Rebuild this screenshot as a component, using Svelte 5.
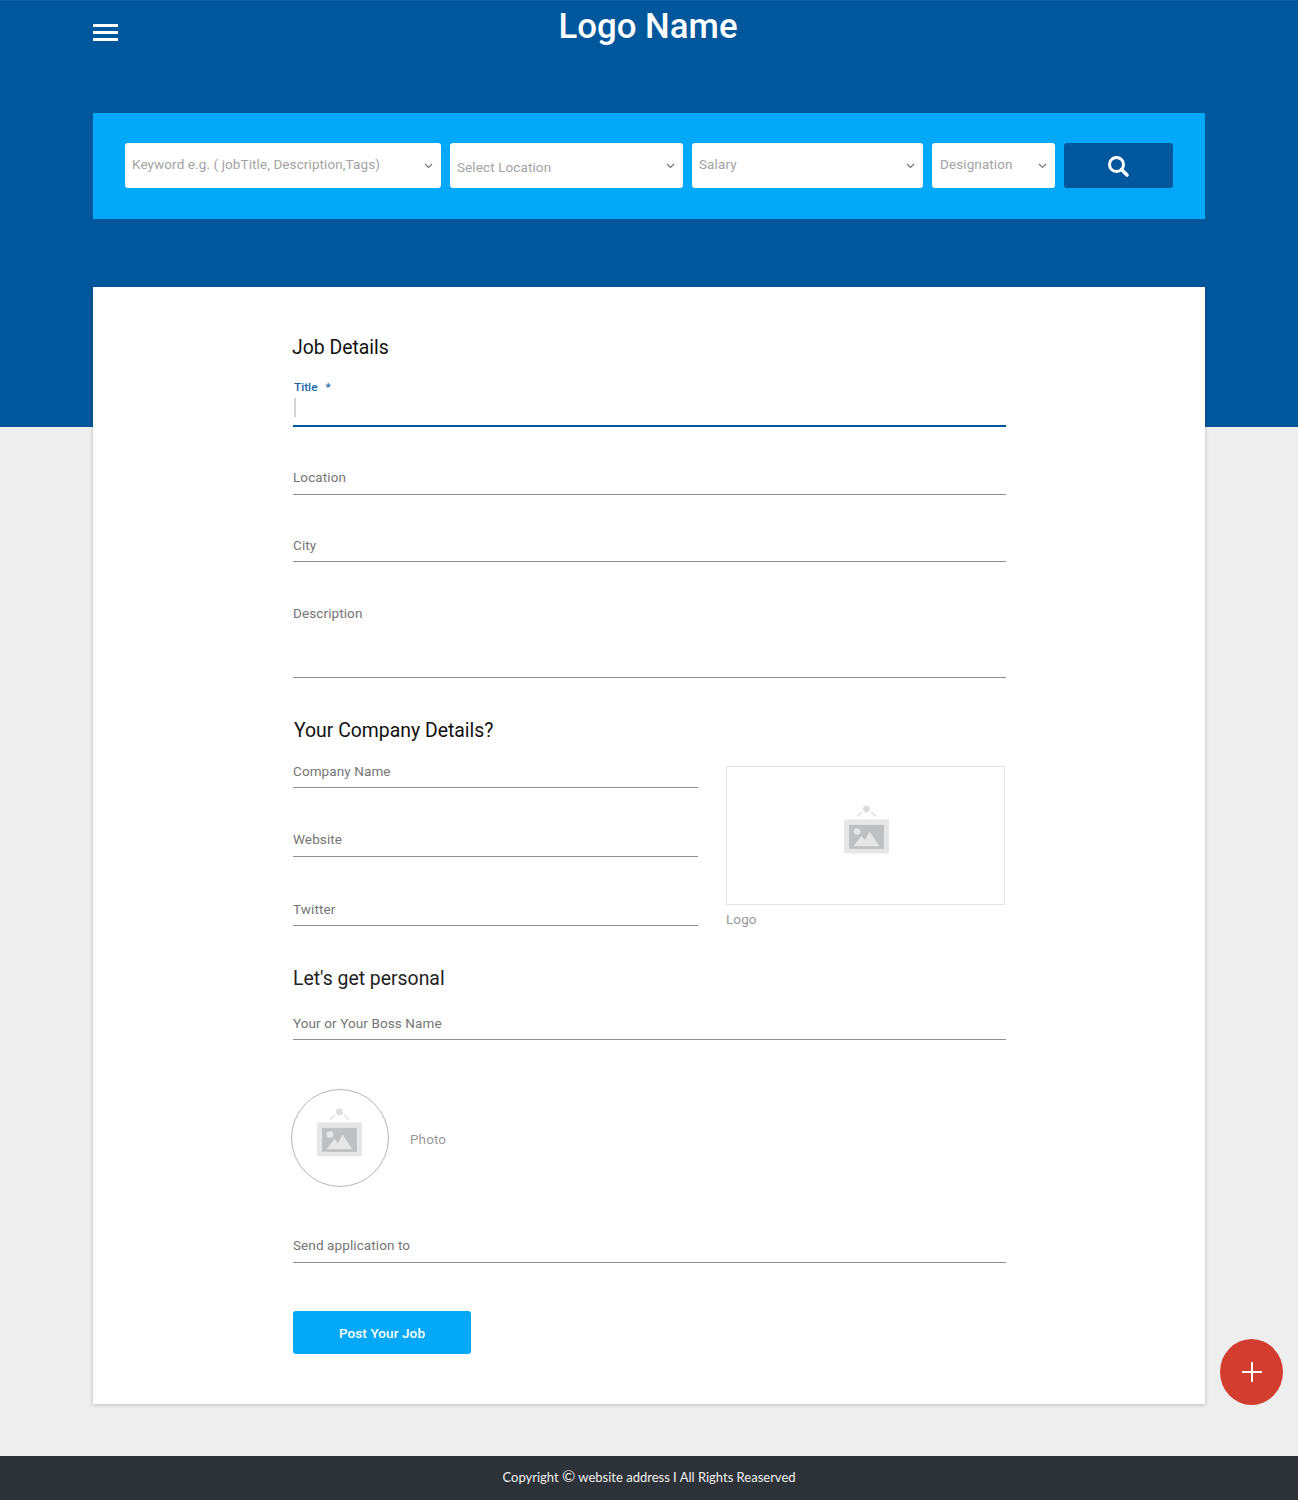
<script lang="ts">
	const filters = [
		{ label: "Keyword e.g. ( jobTitle, Description,Tags)", width: 316, shift: -2, pad: 7 },
		{ label: "Select Location", width: 233, shift: 1, pad: 7 },
		{ label: "Salary", width: 231, shift: -2, pad: 7 },
		{ label: "Designation", width: 123, shift: -2, pad: 8 },
	];
</script>

{#snippet picture(size)}
	<svg class="pic" width={size} height={size * 1.13} viewBox="0 0 45 51" aria-hidden="true">
		<circle cx="22.5" cy="4" r="3.5" fill="#dedede" />
		<path d="M13 11.5 18 7M32 11.5 27 7" stroke="#e6e6e6" stroke-width="2" fill="none" />
		<rect x="0" y="14.500" width="45" height="34" fill="#e6e6e6" />
		<rect x="5" y="20" width="35" height="24" fill="#bfc0c1" />
		<circle cx="13" cy="26.500" r="3.300" fill="#e6e6e6" />
		<path d="M9.500 41.500 17.500 31 21 35 25.500 26.500 35.500 41.500Z" fill="#e6e6e6" />
	</svg>
{/snippet}

{#snippet field(label, cls = "")}
	<div class="field {cls}">
		<span>{label}</span>
	</div>
{/snippet}

<div class="page">
	<header class="hero">
		<div class="topbar">
			<button class="menu" aria-label="Menu">
				<i></i><i></i><i></i>
			</button>
			<h1>Logo Name</h1>
		</div>
		<form class="search" onsubmit={(e) => e.preventDefault()}>
			{#each filters as f}
				<div class="select" style="width: {f.width}px; padding-left: {f.pad}px">
					<span style="transform: translateY({f.shift}px)">{f.label}</span>
					<svg width="9" height="6" viewBox="0 0 9 6" aria-hidden="true">
						<path d="M1 1l3.500 3.500L8 1" fill="none" stroke="#757575" stroke-width="1.200" />
					</svg>
				</div>
			{/each}
			<button class="go" aria-label="Search">
				<svg width="24" height="24" viewBox="0 0 24 24" aria-hidden="true">
					<circle cx="10.500" cy="10.500" r="7" fill="none" stroke="#fff" stroke-width="3" />
					<path d="M15.500 15.500 21 21" stroke="#fff" stroke-width="3.600" stroke-linecap="round" />
				</svg>
			</button>
		</form>
	</header>

	<main class="card">
		<div class="form">
			<h2 class="first">Job Details</h2>
			<div class="active">
				<label for="title">Title <b>*</b></label>
				<div class="caret" id="title"></div>
			</div>
			{@render field("Location", "location")}
			{@render field("City", "city")}
			{@render field("Description", "description")}

			<h2 class="company">Your Company Details?</h2>
			<div class="columns">
				<div class="left">
					{@render field("Company Name", "company-name")}
					{@render field("Website", "website")}
					{@render field("Twitter", "twitter")}
				</div>
				<div class="right">
					<div class="logo-box">{@render picture(45)}</div>
					<span class="caption">Logo</span>
				</div>
			</div>

			<h2 class="personal">Let's get personal</h2>
			{@render field("Your or Your Boss Name", "boss")}
			<div class="photo">
				<div class="circle">{@render picture(45)}</div>
				<span class="caption">Photo</span>
			</div>
			{@render field("Send application to", "send")}

			<button class="post">Post Your Job</button>
		</div>
	</main>

	<footer>Copyright <span class="copy">©</span> website address I All Rights Reaserved</footer>

	<button class="fab" aria-label="Add">
		<svg width="20" height="20" viewBox="0 0 20 20" aria-hidden="true">
			<path d="M10 0v20M0 10h20" stroke="#fff" stroke-width="2" />
		</svg>
	</button>
</div>

<style>
	:global(body) {
		margin: 0;
		background: #eeeeee;
		font-family: Roboto, "Liberation Sans", sans-serif;
	}

	.page {
		position: relative;
		height: 1500px;
		overflow: hidden;
		display: flex;
		flex-direction: column;
	}

	.hero {
		height: 427px;
		flex: none;
		background: #01579b;
		box-shadow: inset 0 1px 0 #0b5f9f;
		padding: 0 93px;
		box-sizing: border-box;
	}

	.topbar {
		position: relative;
		height: 113px;
	}

	.menu {
		position: absolute;
		left: 0;
		top: 24px;
		width: 25px;
		padding: 0;
		border: none;
		background: none;
		display: flex;
		flex-direction: column;
		gap: 4px;
	}

	.menu i {
		display: block;
		height: 3px;
		background: #fff;
	}

	h1 {
		margin: 0;
		padding: 5px 2px 0 0;
		text-align: center;
		color: #fff;
		font-size: 34.800px;
		line-height: 42px;
		font-weight: 500;
	}

	.search {
		height: 106px;
		background: #03a9f8;
		display: flex;
		align-items: flex-start;
		gap: 9px;
		padding: 30px 32px 0;
		box-sizing: border-box;
	}

	.select {
		height: 45px;
		box-sizing: border-box;
		flex: none;
		background: #fff;
		border-radius: 3px;
		display: flex;
		align-items: center;
		justify-content: space-between;
		padding: 0 8px;
		color: #a3a3a3;
		font-size: 13.500px;
		letter-spacing: 0.1px;
	}

	.go {
		width: 109px;
		height: 45px;
		flex: none;
		border: none;
		border-radius: 3px;
		background: #01579b;
		display: flex;
		align-items: center;
		justify-content: center;
		padding: 0 1px 0 0;
	}

	.card {
		margin: -140px 93px 0;
		height: 1117px;
		flex: none;
		background: #fff;
		box-shadow: 0 1px 4px rgba(0, 0, 0, 0.22);
		box-sizing: border-box;
		padding: 0 199px 0 200px;
	}

	.form {
		display: flex;
		flex-direction: column;
		align-items: stretch;
	}

	h2 {
		margin: 0;
		font-size: 19.400px;
		line-height: 24px;
		font-weight: 400;
		color: #111;
	}

	.first {
		margin: 49px 0 0 -1px;
	}

	.active {
		margin-top: 19px;
		height: 48px;
		box-sizing: border-box;
		border-bottom: 2px solid #01579b;
	}

	.active label {
		display: block;
		padding: 1px 0 0 1px;
		font-size: 11.800px;
		line-height: 14px;
		font-weight: 500;
		color: #1467a8;
	}

	.active b {
		margin-left: 5px;
		font-weight: 500;
	}

	.caret {
		width: 1.500px;
		height: 19px;
		margin-top: 4px;
		margin-left: 1px;
		background: #d2d2d2;
	}

	.field {
		border-bottom: 1px solid #8f8f8f;
		color: #757575;
		font-size: 13.500px;
		line-height: 16px;
		letter-spacing: 0.1px;
		box-sizing: border-box;
	}

	.field span {
		display: block;
		margin-top: -1px;
	}

	.location {
		margin-top: 43px;
		height: 25px;
	}

	.city {
		margin-top: 43px;
		height: 24px;
	}

	.description {
		margin-top: 44px;
		height: 72px;
	}

	.company {
		margin: 41px 0 0 1px;
	}

	.columns {
		display: flex;
		justify-content: space-between;
		margin-top: 23px;
		height: 165px;
	}

	.left {
		display: flex;
		flex-direction: column;
		width: 405px;
	}

	.right {
		width: 280px;
	}

	.left :global(.company-name) {
		margin-top: -2px;
		height: 24px;
		flex: none;
	}

	.left :global(.website) {
		margin-top: 44px;
		height: 25px;
		flex: none;
	}

	.left :global(.twitter) {
		margin-top: 45px;
		height: 24px;
		flex: none;
	}

	.logo-box {
		width: 279px;
		height: 139px;
		box-sizing: border-box;
		border: 1px solid #e3e3e3;
		display: flex;
		align-items: center;
		justify-content: center;
	}

	.pic {
		margin-bottom: 10px;
	}

	.logo-box .pic {
		margin-left: 2px;
	}

	.caption {
		color: #9a9a9a;
		font-size: 13.500px;
		line-height: 16px;
		letter-spacing: 0.1px;
	}

	.right .caption {
		display: block;
		margin-top: 6px;
	}

	.personal {
		margin-top: 36px;
		color: #222;
	}

	.boss {
		margin-top: 25px;
		height: 24px;
	}

	.photo {
		margin: 49px 0 0 -2px;
		display: flex;
		align-items: center;
		gap: 21px;
	}

	.photo .caption {
		padding-top: 1px;
	}

	.circle {
		width: 98px;
		height: 98px;
		box-sizing: border-box;
		border: 1px solid #b5b5b5;
		border-radius: 50%;
		display: flex;
		align-items: center;
		justify-content: center;
	}

	.circle .pic {
		margin-right: 1px;
	}

	.send {
		margin-top: 51px;
		height: 25px;
	}

	.post {
		margin-top: 48px;
		width: 178px;
		height: 43px;
		border: none;
		border-radius: 3px;
		background: #03a9f8;
		color: #fff;
		font-family: inherit;
		font-size: 13.500px;
		font-weight: 500;
		letter-spacing: 0.1px;
		padding: 1px 0 0;
	}

	footer {
		margin-top: 52px;
		height: 44px;
		flex: none;
		background: #2d3238;
		color: #f0f0f0;
		font-family: Lato, sans-serif;
		font-size: 13px;
		line-height: 42px;
		text-align: center;
	}

	.copy {
		font-size: 16px;
		line-height: 1;
	}

	.fab {
		position: absolute;
		left: 1220px;
		top: 1339px;
		width: 63px;
		height: 66px;
		border: none;
		border-radius: 50%;
		background: #d33d2f;
		display: flex;
		align-items: center;
		justify-content: center;
		padding: 0;
	}
</style>
